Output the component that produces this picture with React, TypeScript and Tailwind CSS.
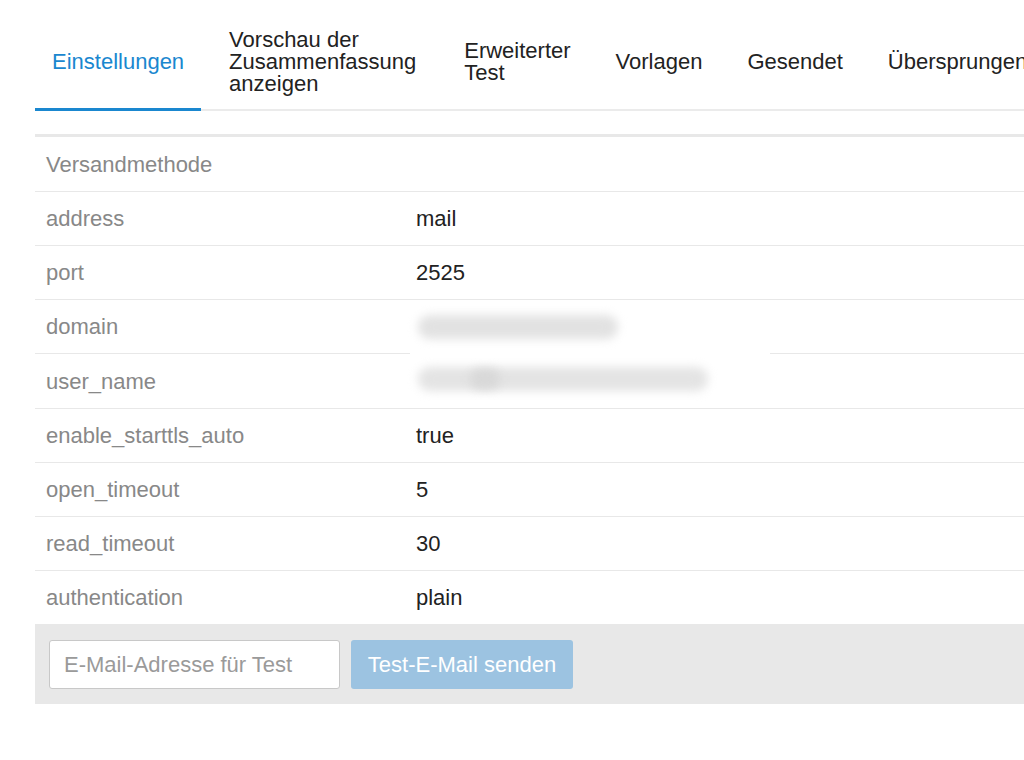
// Mailer-Einstellungen — Tabs, Einstellungstabelle, Test-Leiste
const tabs = [
  'Einstellungen',
  'Vorschau der Zusammenfassung anzeigen',
  'Erweiterter Test',
  'Vorlagen',
  'Gesendet',
  'Übersprungen',
];

const rows: [string, string | null][] = [
  ['address', 'mail'],
  ['port', '2525'],
  ['domain', null],
  ['user_name', null],
  ['enable_starttls_auto', 'true'],
  ['open_timeout', '5'],
  ['read_timeout', '30'],
  ['authentication', 'plain'],
];

export default function App() {
  return (
    <div
      className="w-[1024px] h-[760px] overflow-hidden bg-white pl-[35px] text-[22px] text-[#222]"
      style={{ fontFamily: '"Liberation Sans", Arial, sans-serif' }}
    >
      {/* Tab-Leiste */}
      <div className="flex items-stretch gap-[11px] border-b-2 border-[#ebebeb] pt-[16px] w-[1300px]">
        {tabs.map((t, i) => (
          <div
            key={t}
            className={`flex shrink-0 items-center pl-[17px] py-[13px] leading-[22px] border-b-[3px] -mb-[2px] ${
              i === 1 ? 'pr-[20px]' : 'pr-[17px]'
            } ${i === 0 ? 'text-[#1a87cf] border-[#1a87cf]' : 'border-transparent'}`}
          >
            <span className="w-min">{t}</span>
          </div>
        ))}
      </div>

      <div className="mt-[23px] border-t-[3px] border-[#e8e8e8] relative">
        <div className="flex items-center h-[55px] border-b border-[#e8e8e8] pl-[11px] text-[#888]">
          Versandmethode
        </div>
        {rows.map(([k, v]) => (
          <div
            key={k}
            className={`flex items-center border-b border-[#e8e8e8] ${k === 'user_name' ? 'h-[55px]' : 'h-[54px]'}`}
          >
            <div className="w-[370px] pl-[11px] text-[#888]">{k}</div>
            <div className="pl-[11px]">{v}</div>
          </div>
        ))}

        {/* unkenntlich gemachte Werte */}
        <div className="absolute left-[375px] top-[166px] w-[360px] h-[96px] bg-white">
          <div className="absolute left-[8px] top-[12px] w-[200px] h-[24px] rounded-full bg-[#e2e2e2] blur-[5px]" />
          <div className="absolute left-[8px] top-[64px] w-[290px] h-[24px] rounded-full bg-[#e4e4e4] blur-[5px]" />
          <div className="absolute left-[60px] top-[66px] w-[30px] h-[20px] rounded-full bg-[#d8d8d8] blur-[5px]" />
        </div>

        {/* Test-Leiste */}
        <div className="flex items-center gap-[11px] h-[79px] bg-[#e8e8e8] pl-[14px]">
          <input
            placeholder="E-Mail-Adresse für Test"
            className="w-[291px] h-[49px] rounded-[3px] border border-[#c8c8c8] bg-white px-[14px] text-[22px] placeholder:text-[#9a9a9a] outline-none"
          />
          <button className="w-[222px] h-[49px] rounded-[3px] bg-[#9cc3e1] text-white text-[22px]">
            Test-E-Mail senden
          </button>
        </div>
      </div>
    </div>
  );
}
